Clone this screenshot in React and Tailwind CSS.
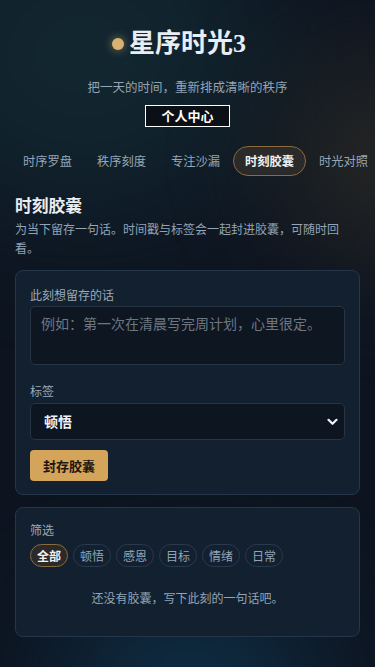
import React, { useState } from 'react';

const tabs = ['时序罗盘', '秩序刻度', '专注沙漏', '时刻胶囊', '时光对照'];
const filters = ['全部', '顿悟', '感恩', '目标', '情绪', '日常'];

const font = { fontFamily: '"Noto Sans CJK SC", "Noto Sans", sans-serif' };

export default function App() {
  const [tab, setTab] = useState('时刻胶囊');
  const [filter, setFilter] = useState('全部');

  return (
    <div
      className="relative min-h-[667px] w-[375px] overflow-hidden bg-[#0d1420] text-[#e6edf3]"
      style={font}
    >
      {/* background glows */}
      <div className="pointer-events-none absolute -left-24 -top-24 h-[300px] w-[360px] rounded-full bg-[#16343c] opacity-60 blur-[70px]" />
      <div className="pointer-events-none absolute -right-24 top-[60px] h-[200px] w-[180px] rounded-full bg-[#3a3528] opacity-60 blur-[60px]" />
      <div className="pointer-events-none absolute -bottom-28 left-[60px] h-[180px] w-[260px] rounded-full bg-[#0f3a55] opacity-70 blur-[60px]" />

      <div className="relative">
        {/* Header */}
        <header className="flex flex-col items-center pt-[27px]">
          <div className="relative">
            <span className="absolute -left-[17px] top-[11px] h-[12px] w-[12px] rounded-full bg-[#d9b171] shadow-[0_0_10px_rgba(217,177,113,0.6)]" />
            <h1
              className="text-[26px] font-bold leading-[34px] text-[#e8eef4]"
              style={{ fontFamily: '"Liberation Serif", "Noto Sans CJK SC", serif' }}
            >
              星序时光3
            </h1>
          </div>
          <p className="mt-[17px] text-[12.5px] leading-[18px] text-[#93a4b6]">
            把一天的时间，重新排成清晰的秩序
          </p>
          <button className="mt-[9px] h-[22px] w-[85px] border border-white bg-[#0b0f16] text-[13px] font-bold leading-[20px] text-white">
            个人中心
          </button>
        </header>

        {/* Tabs */}
        <nav className="mt-[19px] flex gap-[1px] whitespace-nowrap pl-[11px]">
          {tabs.map((t) => (
            <button
              key={t}
              onClick={() => setTab(t)}
              className={`h-[30px] shrink-0 rounded-full border px-[11px] text-[12.25px] leading-[28px] ${
                tab === t
                  ? 'border-[#8a6b3e] bg-[#2a2a2a] font-bold text-[#f1f1f1]'
                  : 'border-transparent text-[#97a6b6]'
              }`}
            >
              {t}
            </button>
          ))}
        </nav>

        {/* Section */}
        <section className="px-[15px]">
          <h2 className="mt-[18px] text-[16.75px] font-bold leading-[22px] text-[#e9eef3]">时刻胶囊</h2>
          <p className="mt-[3px] text-[12px] leading-[19px] text-[#93a4b6]">
            为当下留存一句话。时间戳与标签会一起封进胶囊，可随时回看。
          </p>

          {/* Form card */}
          <div className="mt-[13px] rounded-[8px] border border-[#26364a] bg-[#12202f] px-[14px] pb-[13px] pt-[15px]">
            <label className="block text-[12px] leading-[18px] text-[#9aaabb]">此刻想留存的话</label>
            <textarea
              className="mt-[2px] block h-[59px] w-full resize-none rounded-[5px] border border-[#263444] bg-[#0e1621] px-[10px] py-[6px] text-[14px] leading-[20px] text-[#e6edf3] outline-none placeholder:text-[#6d7782]"
              placeholder="例如：第一次在清晨写完周计划，心里很定。"
            />
            <label className="mt-[17px] block text-[12px] leading-[18px] text-[#9aaabb]">标签</label>
            <div className="relative mt-[3px]">
              <select className="block h-[37px] w-full appearance-none rounded-[5px] border border-[#263444] bg-[#0d1520] px-[13px] text-[14px] font-bold text-[#eef2f6] outline-none">
                <option>顿悟</option>
                <option>感恩</option>
                <option>目标</option>
                <option>情绪</option>
                <option>日常</option>
              </select>
              <svg
                className="pointer-events-none absolute right-[7px] top-[15px] h-[8px] w-[11px]"
                viewBox="0 0 11 8"
                fill="none"
                stroke="#eef2f6"
                strokeWidth="2.2"
                strokeLinecap="round"
                strokeLinejoin="round"
              >
                <path d="M1.5 1.8 L5.5 5.8 L9.5 1.8" />
              </svg>
            </div>
            <button className="mt-[10px] h-[31px] rounded-[4px] bg-[#d4a45b] px-[13px] text-[13px] font-bold text-[#1c1710]">
              封存胶囊
            </button>
          </div>

          {/* Filter card */}
          <div className="mt-[12px] h-[130px] rounded-[8px] border border-[#26364a] bg-[#12202f] px-[14px] pt-[13px]">
            <div className="text-[12px] leading-[18px] text-[#9aaabb]">筛选</div>
            <div className="mt-[5px] flex gap-[5px]">
              {filters.map((f) => (
                <button
                  key={f}
                  onClick={() => setFilter(f)}
                  className={`h-[23px] rounded-full border px-[6px] text-[12px] leading-[21px] ${
                    filter === f
                      ? 'border-[#8a6b3e] bg-[#2a2a2a] font-bold text-[#f1f1f1]'
                      : 'border-[#2a394b] text-[#93a4b6]'
                  }`}
                >
                  {f}
                </button>
              ))}
            </div>
            <p className="mt-[22px] text-center text-[12px] leading-[18px] text-[#93a4b6]">
              还没有胶囊，写下此刻的一句话吧。
            </p>
          </div>
        </section>
      </div>
    </div>
  );
}
